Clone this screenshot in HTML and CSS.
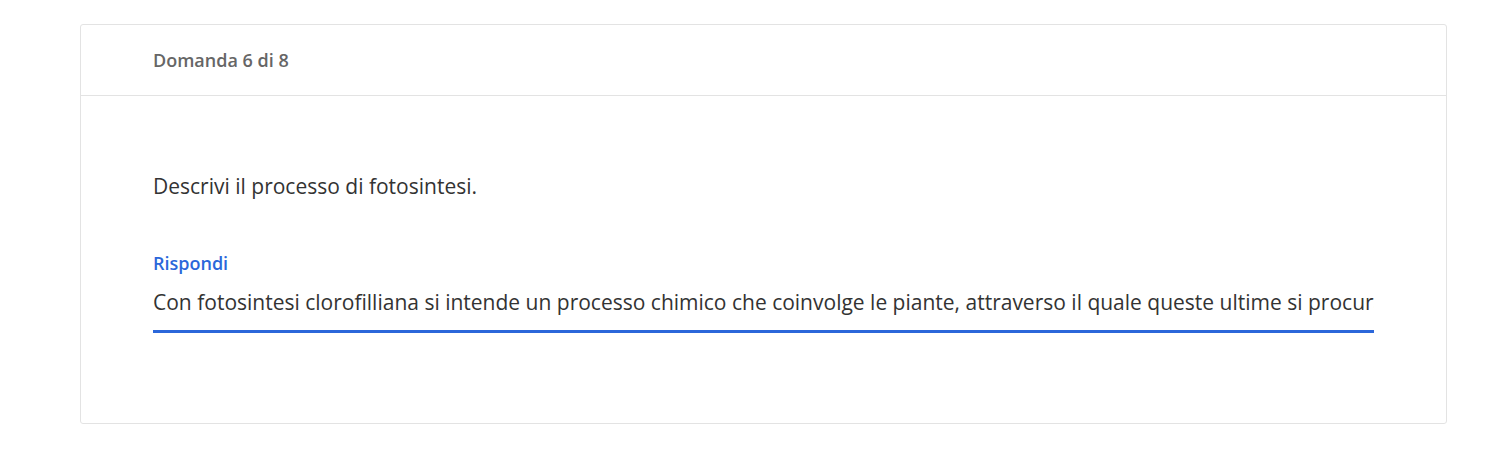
FILE: index.html
```html
<!DOCTYPE html>
<html lang="it">
<head>
<meta charset="utf-8">
<title>Domanda 6 di 8</title>
<link rel="stylesheet" href="styles.css">
</head>
<body>
<div class="card">
  <div class="card-header">Domanda 6 di 8</div>
  <div class="card-body">
    <p class="question">Descrivi il processo di fotosintesi.</p>
    <label class="answer-label" for="answer">Rispondi</label>
    <input class="answer-input" id="answer" type="text" value="Con fotosintesi clorofilliana si intende un processo chimico che coinvolge le piante, attraverso il quale queste ultime si procurano il nutrimento necessario alla loro sopravvivenza.">
  </div>
</div>
</body>
</html>
```
FILE: styles.css
```css
html, body {
  margin: 0;
  padding: 0;
  background: #ffffff;
}
body {
  font-family: "Open Sans", "Liberation Sans", sans-serif;
  padding: 24px 61px 0 80px;
}
.card {
  border: 1px solid #e3e3e3;
  border-radius: 3px;
  background: #fff;
}
.card-header {
  height: 70px;
  display: flex;
  align-items: center;
  padding: 0 72px;
  border-bottom: 1px solid #e3e3e3;
  font-size: 18px;
  font-weight: 600;
  color: #666666;
}
.card-body {
  padding: 74px 72px 90px;
  display: flex;
  flex-direction: column;
}
.question {
  margin: 0;
  font-size: 21px;
  line-height: 32px;
  color: #333333;
}
.answer-label {
  margin-top: 48px;
  font-size: 18px;
  line-height: 27px;
  font-weight: 600;
  color: #2b67da;
}
.answer-input {
  margin-top: 9px;
  border: none;
  border-bottom: 3px solid #2b67da;
  outline: none;
  padding: 0 0 12px;
  font-family: "Open Sans", "Liberation Sans", sans-serif;
  font-size: 21px;
  line-height: 32px;
  color: #333333;
  background: transparent;
}
```
